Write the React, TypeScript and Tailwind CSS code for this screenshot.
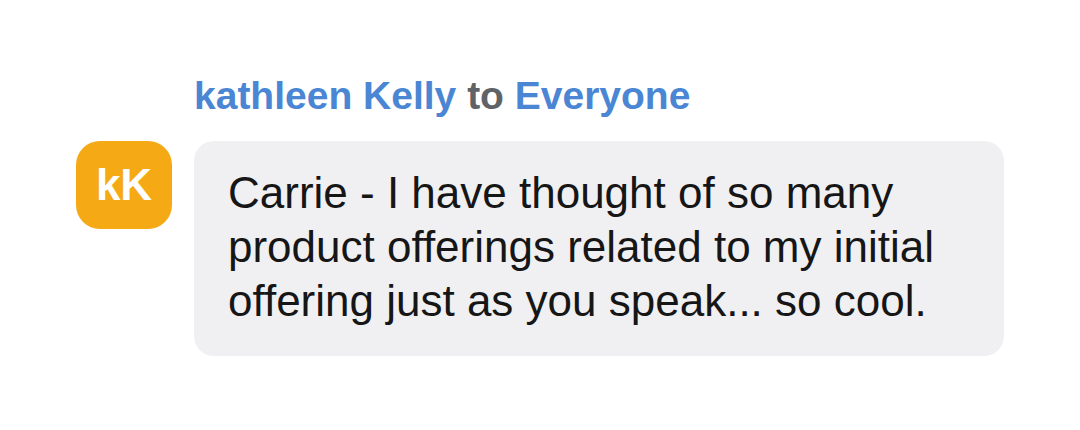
export default function App() {
  return (
    <div className="min-h-screen w-full bg-white font-['Liberation_Sans',Arial,sans-serif]">
      <div className="flex flex-col pl-[76px] pt-[73px]">
        <div className="pl-[118px] text-[39px] font-bold leading-[46px] text-[#4a86d4]">
          kathleen Kelly <span className="text-[#5f6368]">to</span> Everyone
        </div>
        <div className="mt-[22px] flex items-start gap-[22px]">
          <div className="flex h-[88px] w-[96px] shrink-0 items-center justify-center rounded-[24px] bg-[#f5a914] text-[44px] font-bold text-white">
            kK
          </div>
          <div className="w-[810px] rounded-[20px] bg-[#f0f0f2] pb-[28px] pl-[34px] pr-[34px] pt-[25px] text-[44px] leading-[54px] text-[#161616]">
            Carrie - I have thought of so many product offerings related to my initial offering just as you speak... so cool.
          </div>
        </div>
      </div>
    </div>
  );
}
